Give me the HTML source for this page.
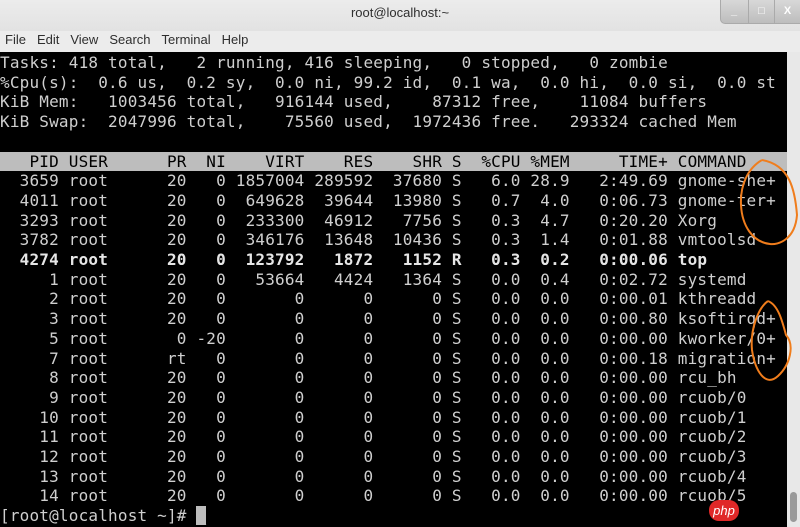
<!DOCTYPE html>
<html><head><meta charset="utf-8"><style>
*{margin:0;padding:0;box-sizing:border-box}
body{width:800px;height:527px;overflow:hidden;background:#000;position:relative;font-family:"Liberation Sans",sans-serif}
#title{position:absolute;left:0;top:0;width:800px;height:31px;background:linear-gradient(#ececec,#e2e2e2);text-align:center;font-size:13px;line-height:26px;color:#2e2e2e}
#btns{position:absolute;right:0;top:0;width:80px;height:24px;background:linear-gradient(#d8d8d8,#bdbdbd);border-radius:0 0 0 5px;border-left:1px solid #aaa;border-bottom:1px solid #aaa}
#btns span{position:absolute;top:0;width:26px;height:23px;text-align:center;color:#fff;font-size:11px;line-height:23px;font-weight:bold;border-left:1px solid #aaa}
#menu{position:absolute;left:0;top:31px;width:800px;height:21px;background:#ececec;font-size:13px;line-height:18px;color:#2e2e2e;padding-left:5px}
#menu span{margin-right:11px}
#term{position:absolute;left:0;top:52px;width:787px;height:475px;background:#000}
#sb{position:absolute;left:787px;top:52px;width:13px;height:475px;background:#e8e8e8}
#sb div{position:absolute;left:3px;top:440px;width:7px;height:30px;background:#9a9a9a;border-radius:4px}
pre{position:absolute;left:0;top:53px;font-family:"DejaVu Sans Mono","Liberation Mono",monospace;font-size:16px;line-height:19.7px;color:#cfcfcf;letter-spacing:0.19px;white-space:pre}
.hd{background:#bdbdbd;color:#000;display:inline-block;width:787px}
b{color:#e6e6e6}
.cur{background:#bdbdbd;color:#bdbdbd}
</style></head><body>
<div id="title">root@localhost:~</div>
<div id="btns"><span style="left:0;border-left:none">_</span><span style="left:27px">&#9633;</span><span style="left:53px">X</span></div>
<div id="menu"><span>File</span><span>Edit</span><span>View</span><span>Search</span><span>Terminal</span><span>Help</span></div>
<div id="term"></div>
<div id="sb"><div></div></div>
<pre>Tasks: 418 total,   2 running, 416 sleeping,   0 stopped,   0 zombie
%Cpu(s):  0.6 us,  0.2 sy,  0.0 ni, 99.2 id,  0.1 wa,  0.0 hi,  0.0 si,  0.0 st
KiB Mem:   1003456 total,   916144 used,    87312 free,    11084 buffers
KiB Swap:  2047996 total,    75560 used,  1972436 free.   293324 cached Mem

<span class="hd">   PID USER      PR  NI    VIRT    RES    SHR S  %CPU %MEM     TIME+ COMMAND   </span>
  3659 root      20   0 1857004 289592  37680 S   6.0 28.9   2:49.69 gnome-she+
  4011 root      20   0  649628  39644  13980 S   0.7  4.0   0:06.73 gnome-ter+
  3293 root      20   0  233300  46912   7756 S   0.3  4.7   0:20.20 Xorg
  3782 root      20   0  346176  13648  10436 S   0.3  1.4   0:01.88 vmtoolsd
<b>  4274 root      20   0  123792   1872   1152 R   0.3  0.2   0:00.06 top</b>
     1 root      20   0   53664   4424   1364 S   0.0  0.4   0:02.72 systemd
     2 root      20   0       0      0      0 S   0.0  0.0   0:00.01 kthreadd
     3 root      20   0       0      0      0 S   0.0  0.0   0:00.80 ksoftirqd+
     5 root       0 -20       0      0      0 S   0.0  0.0   0:00.00 kworker/0+
     7 root      rt   0       0      0      0 S   0.0  0.0   0:00.18 migration+
     8 root      20   0       0      0      0 S   0.0  0.0   0:00.00 rcu_bh
     9 root      20   0       0      0      0 S   0.0  0.0   0:00.00 rcuob/0
    10 root      20   0       0      0      0 S   0.0  0.0   0:00.00 rcuob/1
    11 root      20   0       0      0      0 S   0.0  0.0   0:00.00 rcuob/2
    12 root      20   0       0      0      0 S   0.0  0.0   0:00.00 rcuob/3
    13 root      20   0       0      0      0 S   0.0  0.0   0:00.00 rcuob/4
    14 root      20   0       0      0      0 S   0.0  0.0   0:00.00 rcuob/5
[root@localhost ~]# <span class="cur">_</span></pre>
<svg style="position:absolute;left:0;top:0" width="800" height="527">
<path d="M762 160 C790 165 795 190 797 215 C795 240 778 245 770 244 C752 242 742 225 741 205 C740 185 748 168 762 160" fill="none" stroke="#f07d1c" stroke-width="2"/>
<path d="M768 301 C778 305 782 320 786 335 C795 345 790 365 778 376 C765 388 755 370 752 350 C750 330 758 308 768 301" fill="none" stroke="#f07d1c" stroke-width="2"/>
<rect x="709" y="500" width="30" height="21" rx="10" fill="#e02828"/>
<text x="724" y="515" font-family="Liberation Sans,sans-serif" font-size="13" font-style="italic" fill="#fff" text-anchor="middle">php</text>
</svg>
</body></html>
